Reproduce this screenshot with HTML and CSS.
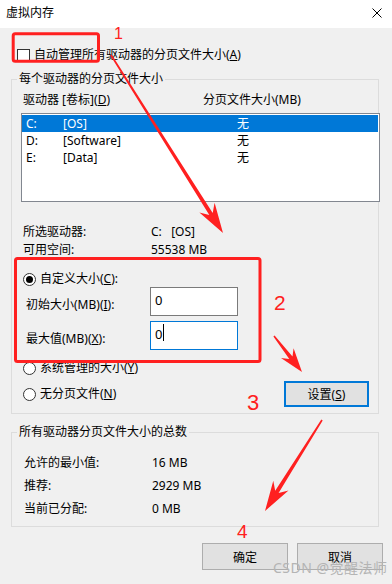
FILE: index.html
```html
<!DOCTYPE html>
<html>
<head>
    <meta charset="utf-8">
    <link rel="stylesheet" href="styles.css">
</head>
<body>
    <div class="window">
        <div class="titlebar">
            <span class="title">虚拟内存</span>
            <svg class="close" viewBox="0 0 10 10"><path d="M0.5 0.5L9.5 9.5M9.5 0.5L0.5 9.5" stroke="#000" stroke-width="1"/></svg>
        </div>
        <div class="content">
            <div class="auto-row"><span class="checkbox"></span><span>自动管理所有驱动器的分页文件大小(<u>A</u>)</span></div>

            <fieldset class="group drives">
                <legend>每个驱动器的分页文件大小</legend>
                <div class="list-head"><span class="col-drive">驱动器 [卷标](<u>D</u>)</span><span>分页文件大小(MB)</span></div>
                <div class="listbox">
                    <div class="list-row selected"><span class="drive">C:</span><span class="label">[OS]</span><span>无</span></div>
                    <div class="list-row"><span class="drive">D:</span><span class="label">[Software]</span><span>无</span></div>
                    <div class="list-row"><span class="drive">E:</span><span class="label">[Data]</span><span>无</span></div>
                </div>
                <div class="info">
                    <div class="info-row"><span class="info-label">所选驱动器:</span><span>C:&nbsp;&nbsp;&nbsp;[OS]</span></div>
                    <div class="info-row"><span class="info-label">可用空间:</span><span>55538 MB</span></div>
                </div>
                <div class="radio-row custom-row"><span class="radio checked"></span><span>自定义大小(<u>C</u>):</span></div>
                <div class="field-row"><span class="field-label">初始大小(MB)(<u>I</u>):</span><div class="input">0</div></div>
                <div class="field-row"><span class="field-label">最大值(MB)(<u>X</u>):</span><div class="input focus">0<span class="caret"></span></div></div>
                <div class="radio-row sys-row"><span class="radio"></span><span>系统管理的大小(<u>Y</u>)</span></div>
                <div class="none-row">
                    <div class="radio-row"><span class="radio"></span><span>无分页文件(<u>N</u>)</span></div>
                    <div class="btn default">设置(<u>S</u>)</div>
                </div>
            </fieldset>

            <fieldset class="group totals">
                <legend>所有驱动器分页文件大小的总数</legend>
                <div class="info-row total-row"><span class="info-label">允许的最小值:</span><span>16 MB</span></div>
                <div class="info-row total-row"><span class="info-label">推荐:</span><span>2929 MB</span></div>
                <div class="info-row total-row"><span class="info-label">当前已分配:</span><span>0 MB</span></div>
            </fieldset>

            <div class="buttons">
                <div class="btn">确定</div>
                <div class="btn">取消</div>
            </div>
        </div>

        <!-- annotation layer drawn on top of the dialog -->
        <svg class="marks" width="392" height="584" viewBox="0 0 392 584">
            <g fill="none" stroke="#ff2020" stroke-width="3">
                <rect x="13.2" y="33.8" width="85.3" height="27.4" rx="2"/>
                <rect x="15.5" y="258.5" width="244.5" height="103" rx="2"/>
            </g>
            <g fill="#ff2020">
                <polygon points="110.3,55.4 209.3,215.1 199.4,212.4 223,233 214.6,202.8 212.7,212.9 111.7,54.6"/>
                <polygon points="273.4,336.5 289.3,359.0 281.0,358.0 302,372 293.6,348.2 292.5,356.6 274.6,335.5"/>
                <polygon points="321.3,419.6 275.2,490.8 273.3,480.8 265,511 288.5,490.4 278.6,493.0 322.7,420.4"/>
            </g>
            <g fill="#ff2020" font-family="Liberation Sans, sans-serif">
                <text x="114" y="39" font-size="16">1</text>
                <text x="274" y="310" font-size="21">2</text>
                <text x="247" y="410" font-size="22">3</text>
                <text x="237" y="538" font-size="19">4</text>
            </g>
        </svg>
        <span class="watermark">CSDN @觉醒法师</span>
    </div>
</body>
</html>
```

FILE: styles.css
```css
* {
    box-sizing: border-box;
}
body {
    margin: 0;
    background: #f0f0f0;
    font-family: "Noto Sans", "Noto Sans CJK SC", sans-serif;
    font-size: 12px;
    color: #000;
}
.window {
    position: relative;
    width: 392px;
    height: 584px;
    overflow: hidden;
    background: #f0f0f0;
}
.titlebar {
    height: 28px;
    background: #fff;
    display: flex;
    align-items: center;
    justify-content: space-between;
    padding: 0 10px 0 6px;
}
.title {
    line-height: 16px;
    margin-top: -2px;
}
.close {
    width: 10px;
    height: 10px;
    margin-top: -2px;
}
.content {
    display: flex;
    flex-direction: column;
    padding: 0 13px 0 11px;
}
u {
    text-underline-offset: 1px;
}

/* top checkbox */
.auto-row {
    display: flex;
    align-items: center;
    gap: 4px;
    height: 16px;
    line-height: 16px;
    margin: 19px 0 0 6px;
}
.checkbox {
    width: 13px;
    height: 13px;
    border: 1px solid #333;
    background: #fff;
}

/* group boxes */
.group {
    margin: 0;
    min-width: 0;
    border: 1px solid #dcdcdc;
}
.group legend {
    padding: 0 2px;
    line-height: 16px;
}
.drives {
    margin-top: 8px;
    padding: 5px 9px 6px 11px;
}
.drives legend {
    margin-left: -6px;
}
.totals {
    margin-top: 10px;
    padding: 11px 9px 6px 12px;
}
.totals legend {
    margin-left: -7px;
}

/* drive list */
.list-head {
    display: flex;
    line-height: 16px;
}
.col-drive {
    width: 180px;
}
.listbox {
    margin: 5px -11px 0 -2px;
    height: 89px;
    border: 1px solid #828790;
    background: #fff;
    padding: 1px 1px 1px 0;
}
.list-row {
    display: flex;
    height: 17px;
    line-height: 17px;
    padding-left: 4px;
}
.list-row.selected {
    background: #0078d7;
    color: #fff;
}
.list-row .drive {
    width: 37px;
}
.list-row .label {
    width: 174px;
}

.info {
    margin-top: 21px;
}
.info-row {
    display: flex;
    line-height: 18px;
}
.info-label {
    width: 128px;
}
.total-row {
    line-height: 23px;
}

/* radios and inputs */
.radio-row {
    display: flex;
    align-items: center;
    gap: 4px;
    line-height: 16px;
}
.radio {
    width: 13px;
    height: 13px;
    border: 1px solid #333;
    border-radius: 50%;
    background: #fff;
    display: flex;
    align-items: center;
    justify-content: center;
}
.radio.checked::after {
    content: "";
    width: 7px;
    height: 7px;
    border-radius: 50%;
    background: #000;
}
.custom-row {
    margin-top: 12px;
}
.field-row {
    display: flex;
    align-items: center;
    padding-left: 3px;
}
.field-row + .field-row {
    margin-top: 5px;
}
.field-label {
    width: 124px;
    padding-top: 4px;
}
.input {
    width: 88px;
    height: 29px;
    border: 1px solid #7a7a7a;
    background: #fff;
    display: flex;
    align-items: flex-start;
    padding: 3px 0 0 4px;
    font-size: 13px;
    line-height: 18px;
}
.input.focus {
    border-color: #0078d7;
}
.caret {
    width: 1px;
    height: 17px;
    margin: -1px 0 0 1px;
    background: #000;
}
.sys-row {
    margin-top: 10px;
}
.none-row {
    display: flex;
    align-items: center;
    justify-content: space-between;
    margin-top: 5px;
}

/* buttons */
.btn {
    width: 86px;
    height: 27px;
    border: 1px solid #adadad;
    background: #e1e1e1;
    display: flex;
    align-items: center;
    justify-content: center;
}
.btn.default {
    width: 85px;
    height: 26px;
    border: 2px solid #0078d7;
}
.buttons {
    display: flex;
    justify-content: flex-end;
    gap: 9px;
    margin: 16px -4px 0 0;
}

/* overlays */
.marks {
    position: absolute;
    top: 0;
    left: 0;
    pointer-events: none;
}
.watermark {
    position: absolute;
    left: 273px;
    top: 559px;
    font-size: 14px;
    line-height: 18px;
    color: #b4b4b4;
    letter-spacing: 0.5px;
}
```
